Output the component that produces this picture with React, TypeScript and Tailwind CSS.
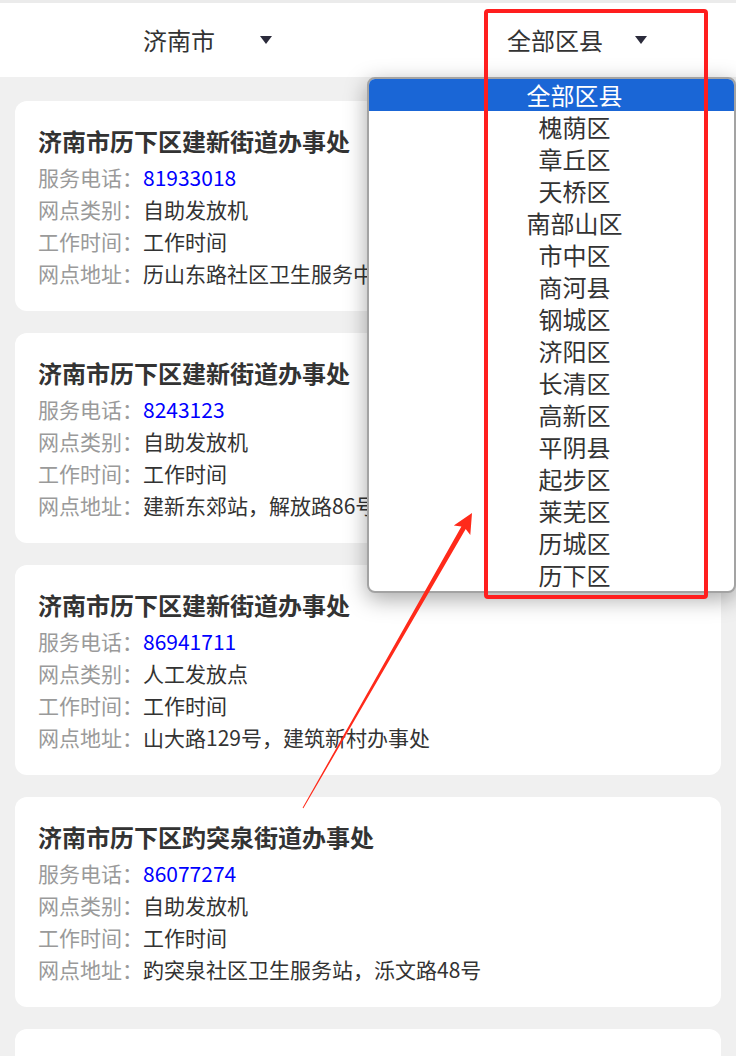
import React from 'react';

interface Outlet {
  name: string;
  phone: string;
  type: string;
  hours: string;
  address: string;
}

const outlets: Outlet[] = [
  { name: '济南市历下区建新街道办事处', phone: '81933018', type: '自助发放机', hours: '工作时间', address: '历山东路社区卫生服务中心' },
  { name: '济南市历下区建新街道办事处', phone: '8243123', type: '自助发放机', hours: '工作时间', address: '建新东郊站，解放路86号' },
  { name: '济南市历下区建新街道办事处', phone: '86941711', type: '人工发放点', hours: '工作时间', address: '山大路129号，建筑新村办事处' },
  { name: '济南市历下区趵突泉街道办事处', phone: '86077274', type: '自助发放机', hours: '工作时间', address: '趵突泉社区卫生服务站，泺文路48号' },
  { name: '济南市历下区泉城路街道办事处', phone: '86012345', type: '自助发放机', hours: '工作时间', address: '泉城路社区' },
];

const districts = [
  '全部区县', '槐荫区', '章丘区', '天桥区', '南部山区', '市中区', '商河县', '钢城区',
  '济阳区', '长清区', '高新区', '平阴县', '起步区', '莱芜区', '历城区', '历下区',
];

function Caret() {
  return <span className="w-0 h-0 border-x-[6.5px] border-x-transparent border-t-[8px] border-t-[#2b2b3b]" />;
}

function Row({ label, children }: { label: string; children: React.ReactNode }) {
  return (
    <div className="flex h-[32px] items-center text-[21px] whitespace-nowrap">
      <span className="text-[#9a9a9a]">{label}：</span>
      {children}
    </div>
  );
}

function OutletCard({ o }: { o: Outlet }) {
  return (
    <div className="bg-white rounded-[12px] h-[210px] shrink-0 px-[23px] pt-[22px] overflow-hidden">
      <div className="text-[24px] leading-[36px] font-bold text-[#333] whitespace-nowrap">{o.name}</div>
      <div className="mt-[3px]">
        <Row label="服务电话">
          <span className="text-[#0000ff]">{o.phone}</span>
        </Row>
        <Row label="网点类别">
          <span className="text-[#333]">{o.type}</span>
        </Row>
        <Row label="工作时间">
          <span className="text-[#333]">{o.hours}</span>
        </Row>
        <Row label="网点地址">
          <span className="text-[#333]">{o.address}</span>
        </Row>
      </div>
    </div>
  );
}

export default function App() {
  return (
    <div
      className="relative w-[736px] h-[1056px] overflow-hidden bg-[#f0f0f0]"
      style={{ fontFamily: '"Noto Sans CJK SC", "Noto Sans", sans-serif' }}
    >
      <div className="h-[3px] bg-[#ebebeb]" />
      <div className="flex h-[74px] bg-white text-[24px] text-[#333]">
        <div className="w-[368px] flex items-center pl-[143px]">
          <span>济南市</span>
          <span className="ml-[45px] flex"><Caret /></span>
        </div>
        <div className="w-[368px] flex items-center pl-[139px]">
          <span>全部区县</span>
          <span className="ml-[32px] flex"><Caret /></span>
        </div>
      </div>

      <div className="flex flex-col gap-[22px] px-[15px] pt-[24px]">
        {outlets.map((o, i) => (
          <OutletCard key={i} o={o} />
        ))}
      </div>

      {/* district dropdown */}
      <div className="absolute left-[367px] top-[77px] w-[369px] bg-white border-2 border-[#a3a3a3] rounded-[8px] overflow-hidden shadow-[0_6px_22px_rgba(0,0,0,0.35)]">
        {districts.map((d, i) => (
          <div
            key={d}
            className={`h-[32px] leading-[32px] text-[24px] text-center pl-[46px] ${
              i === 0 ? 'bg-[#1a66d6] text-white' : 'text-[#333]'
            }`}
          >
            {d}
          </div>
        ))}
      </div>

      {/* annotation */}
      <div className="absolute left-[484px] top-[9px] w-[224px] h-[590px] border-4 border-[#ff1e1e] rounded-[4px] pointer-events-none" />
      <svg className="absolute inset-0 pointer-events-none" width="736" height="1056" viewBox="0 0 736 1056">
        <polygon
          points="302.6,807.8 461.4,526.5 453.8,525.6 472,513 470.3,535.1 465.7,529 303.4,808.3"
          fill="#ff2a1a"
        />
      </svg>
    </div>
  );
}
